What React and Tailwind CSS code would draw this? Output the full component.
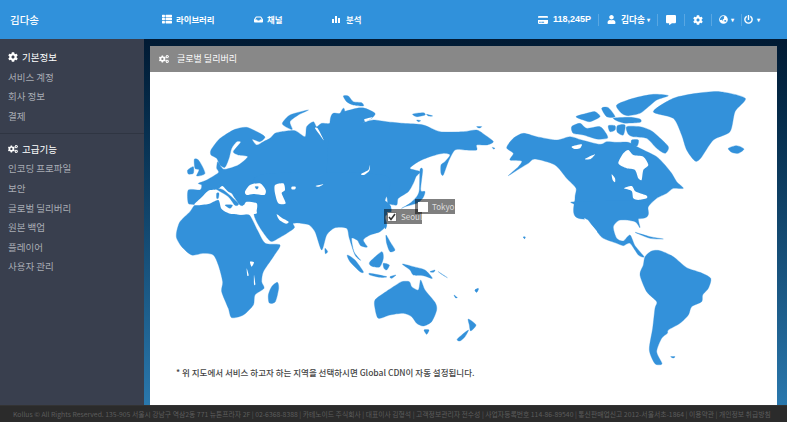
import React from "react";
import { FaThList, FaInbox, FaCreditCard, FaUser, FaCommentAlt, FaCog, FaCogs, FaGlobeAsia, FaPowerOff } from "react-icons/fa";

// Closed Catmull-Rom curve through the traced points, so coasts read as organic outlines.
const pts = (s) => {
  const p = s.trim().split(/\s+/).map((q) => q.split(",").map(Number));
  const n = p.length;
  let d = `M${p[0][0]},${p[0][1]}`;
  for (let i = 0; i < n; i++) {
    const a = p[(i - 1 + n) % n], b = p[i], c = p[(i + 1) % n], e = p[(i + 2) % n];
    const c1x = b[0] + (c[0] - a[0]) / 8, c1y = b[1] + (c[1] - a[1]) / 8;
    const c2x = c[0] - (e[0] - b[0]) / 8, c2y = c[1] - (e[1] - b[1]) / 8;
    d += `C${c1x.toFixed(1)},${c1y.toFixed(1)} ${c2x.toFixed(1)},${c2y.toFixed(1)} ${c[0]},${c[1]}`;
  }
  return d + "Z";
};
const BLUE = "#3391da";

// Each group is traced at 3x from an origin on the page; pieces overlap to form the continents.
const map = [
  {
    x: 175, y: 90,
    land: [
      // Europe and western Russia
      "40,300 75,300 80,285 70,280 95,270 130,248 125,235 128,215 138,230 150,238 190,225 218,200 190,195 175,185 197,157 185,155 170,175 162,205 150,232 135,225 125,205 108,195 108,180 130,150 150,135 180,118 215,112 255,130 270,142 255,155 232,148 245,165 265,155 285,145 300,130 320,125 360,122 390,140 395,110 415,95 425,110 440,100 465,100 490,80 510,70 510,390 320,390 240,370 170,370 60,345 40,340",
      "58,208 72,212 90,250 65,258 72,240 60,235",
      "38,240 55,230 55,250 40,252",
      "322,100 345,75 400,60 370,75 345,95 352,118 335,112",
    ],
    holes: [
      "58,345 80,322 100,302 128,298 142,288 160,305 190,320 205,345 215,335 245,340 245,362 240,372 170,372 140,357 130,330 100,342",
      "210,305 225,285 255,280 272,300 268,315 235,312 215,315",
      "300,285 325,280 330,300 320,310 332,340 310,340 300,310",
      "350,290 362,290 360,298 350,298",
      "422,288 445,283 432,290",
      "420,115 428,115 446,150 438,140",
    ],
    top: [
      "125,298 145,300 190,340 180,346 160,320",
      "170,305 200,320 205,345 195,345 180,325",
      "150,345 172,345 165,355",
      "125,310 132,310 130,325 125,325",
      "240,290 250,290 246,298",
    ],
  },
  {
    x: 330, y: 90,
    land: [
      // Siberia and the far east
      "0,95 30,70 80,55 105,55 135,70 125,85 100,97 130,90 170,95 220,100 280,105 330,125 400,125 440,120 465,135 490,155 470,165 440,165 440,180 405,180 375,180 355,215 340,255 333,250 333,225 345,215 360,195 340,190 300,200 265,215 240,235 270,245 258,260 250,280 235,305 205,325 200,345 175,340 170,320 155,325 180,345 170,375 0,390",
      "270,240 278,240 272,300 285,305 278,325 260,340 225,350 215,355 240,340 260,320 268,300",
      "40,18 55,18 70,35 95,38 100,48 70,45 50,35",
      "248,72 280,68 285,75 260,80",
      "290,73 308,78 295,78",
      "260,90 272,92 265,95",
      "440,110 455,110 448,114",
      "487,172 495,175 490,177",
    ],
    holes: ["93,252 115,240 120,225 118,242 102,255", "103,88 128,82 108,95"],
    top: [],
  },
  {
    x: 150, y: 75,
    land: [
      // South Asia, Arabia
      "705,380 722,395 706,425 710,450 690,470 660,480 640,495 652,516 632,512 622,496 605,490 612,530 632,556 615,540 598,490 590,460 555,458 530,480 515,525 495,470 470,445 430,445 432,460 385,490 358,496 312,418 330,300 700,300",
      // Africa
      "80,470 90,440 120,410 135,390 165,385 200,392 215,400 245,412 270,420 298,420 322,465 346,505 390,510 370,545 340,590 335,620 342,640 315,660 310,690 280,720 245,728 235,700 215,650 218,620 205,570 190,540 160,535 125,540 95,515 80,490",
      "382,622 386,640 376,680 358,684 355,660 365,635",
      "592,540 615,555 640,590 630,590 600,560",
      "704,448 710,452 706,462",
      "525,520 533,530 526,536",
    ],
    holes: [
      "380,418 395,428 416,440 408,446 388,435",
      "300,560 312,562 305,575",
      "290,580 296,600 292,602",
      "312,600 316,628 312,628",
    ],
    top: [],
  },
  {
    x: 370, y: 215,
    land: [
      // Australia, Oceania
      "15,255 45,232 75,212 95,200 118,200 125,215 145,225 152,195 165,225 195,262 200,285 185,320 160,333 140,325 125,305 100,295 60,300 25,310 15,280",
      "162,345 177,345 170,358",
      "295,312 318,330 302,348 298,330",
      "262,372 295,345 285,365 270,378",
      "40,145 58,150 50,165 42,160",
      "97,147 130,155 165,165 187,190 160,182 130,180 120,165",
      "0,140 35,110 40,130 30,155 10,155 0,150",
      "48,60 60,80 75,105 60,110 50,85",
      "0,175 50,185 30,187 0,180",
      "60,185 78,180 65,190",
      "180,170 195,165 190,172",
      "205,170 232,188 215,178",
      "315,225 325,222 320,232",
      "252,240 262,248 256,248",
      "461,66 466,68 463,71",
    ],
    holes: [],
    top: [],
  },
  {
    x: 500, y: 85,
    land: [
      // Canada
      "20,188 40,160 70,145 110,155 170,165 210,155 245,165 300,178 320,170 350,172 385,172 420,190 470,215 495,240 515,265 530,290 550,310 520,310 500,325 470,340 445,365 430,400 235,400 225,340 228,310 200,280 165,240 105,222 85,235 60,250 25,272 55,245 65,228 30,225 40,205",
      "215,125 240,115 260,130 300,125 318,145 322,160 290,162 250,150 220,145",
      "380,125 420,125 450,135 470,150 505,185 495,205 470,190 440,160 400,155 385,148",
      "395,165 415,165 412,182 395,180",
      "350,60 400,40 460,28 505,32 470,45 440,70 420,85 385,92 365,85",
      "340,100 390,97 420,102 420,112 370,114",
      "228,95 260,85 285,80 300,95 270,110 250,105",
      "305,70 325,68 345,95 320,95",
      "325,122 345,122 345,135 330,140",
      "352,122 375,120 370,150 352,142",
    ],
    holes: [
      "355,235 370,205 385,195 400,210 430,215 445,240 430,255 425,285 415,280 405,255 380,250",
      "372,310 395,303 405,318 420,325 440,332 440,340 415,345 400,340 395,318",
      "215,185 245,178 240,190 225,192",
      "255,222 285,208 272,222",
      "335,268 345,280 345,292 338,285",
    ],
    top: [],
  },
  {
    x: 460, y: 75,
    land: [
      // USA, Central America
      "345,380 560,380 535,425 540,458 525,440 480,435 460,455 470,490 490,498 510,480 525,512 552,545 535,540 510,505 490,512 470,505 430,490 415,475 380,430 345,390",
      // Greenland
      "580,110 640,70 710,55 780,50 856,70 825,110 810,170 760,195 722,250 705,258 680,225 665,180 640,130",
      "805,220 830,212 852,222 835,235 815,232",
      // South America
      "540,600 550,570 555,545 575,528 600,527 640,545 680,578 720,592 752,610 745,640 728,660 725,680 695,695 685,720 660,745 625,765 622,775 605,790 590,830 606,866 585,866 568,825 578,760 585,700 590,680 560,650",
      // Caribbean and specks
      "525,472 570,485 610,492 570,490",
      "632,845 645,845 640,849",
      "45,645 55,640 50,652",
      "190,486 196,486 193,490",
    ],
    holes: ["375,430 410,468 405,470 378,440"],
    top: [],
  },
];

function Check({ on }) {
  return (
    <span className="w-[10px] h-[10px] bg-white flex items-center justify-center">
      {on && (
        <svg viewBox="0 0 10 10" className="w-[10px] h-[10px]">
          <rect x="0.5" y="0.5" width="9" height="9" fill="none" stroke="#777" />
          <path d="M2 5l2 2.5L8 2" fill="none" stroke="#333" strokeWidth="1.6" />
        </svg>
      )}
    </span>
  );
}

function Pin({ label, on, className }) {
  return (
    <div className={"absolute h-[15px] flex items-center gap-[4px] pl-[3px] bg-black/50 text-[#ddd] text-[8px] " + className}>
      <Check on={on} />
      <span>{label}</span>
    </div>
  );
}

const Sep = () => <span className="w-px h-[12px] bg-white/20" />;

function Bars() {
  return (
    <svg viewBox="0 0 8 8" className="w-[8px] h-[8px]" fill="currentColor">
      <rect x="0" y="4" width="2" height="4" />
      <rect x="3" y="1" width="2" height="7" />
      <rect x="6" y="3" width="2" height="5" />
    </svg>
  );
}

function Section({ icon, title, items }) {
  return (
    <div>
      <div className="h-[20px] flex items-center gap-[4px] pl-[8px] text-white text-[9.5px]">
        {icon}
        <span>{title}</span>
      </div>
      {items.map((t) => (
        <div key={t} className="h-[19.6px] flex items-center pl-[8px] text-[#a9adb5] text-[9.5px]">{t}</div>
      ))}
    </div>
  );
}

function WorldMap() {
  const draw = (list, fill, key) =>
    list.map((p, i) => <path key={key + i} d={pts(p)} fill={fill} stroke={fill === BLUE ? BLUE : "none"} strokeWidth="1" strokeLinejoin="round" />);
  return (
    <svg viewBox="150 72 627 294" className="block w-[627px] h-[294px]">
      {map.map((g) => (
        <g key={g.x + "-" + g.y} transform={`translate(${g.x} ${g.y}) scale(0.33333)`}>
          {draw(g.land, BLUE, "l")}
        </g>
      ))}
      {map.map((g) => (
        <g key={g.x + "_" + g.y} transform={`translate(${g.x} ${g.y}) scale(0.33333)`}>
          {draw(g.holes, "#ffffff", "h")}
          {draw(g.top, BLUE, "t")}
        </g>
      ))}
    </svg>
  );
}

export default function App() {
  return (
    <div className="w-[787px] h-[422px] overflow-hidden flex flex-col bg-[#2b2b2b]" style={{ fontFamily: '"Noto Sans CJK KR", "Noto Sans", sans-serif' }}>
      <header className="h-[39px] shrink-0 bg-[#3091db] text-white flex items-center">
        <div className="w-[162px] pl-[10px] text-[10.5px] font-medium">김다송</div>
        <nav className="flex items-center text-[8.4px] font-bold">
          <div className="w-[92px] flex items-center gap-[4px]"><FaThList className="w-[10px] h-[10px]" />라이브러리</div>
          <div className="w-[78px] flex items-center gap-[4px]"><FaInbox className="w-[9px] h-[9px]" />채널</div>
          <div className="flex items-center gap-[6px]"><Bars />분석</div>
        </nav>
        <div className="ml-auto pr-[27px] flex items-center gap-[7px] text-[9px] font-semibold">
          <FaCreditCard className="w-[10px] h-[10px] -mr-[2px]" />
          <span className="w-[38px] text-[9px] font-bold whitespace-nowrap" style={{ fontFamily: '"Liberation Sans", sans-serif' }}>118,245P</span>
          <Sep />
          <FaUser className="w-[9px] h-[9px] ml-[1px]" />
          <span className="text-[8.7px] -ml-[2px]">김다송</span>
          <span className="text-[6px] -ml-[5px]">▾</span>
          <Sep />
          <FaCommentAlt className="w-[10px] h-[10px] mx-[1px]" />
          <Sep />
          <FaCog className="w-[10px] h-[10px] mx-[1px]" />
          <Sep />
          <FaGlobeAsia className="w-[9px] h-[9px]" />
          <span className="text-[6px] -ml-[4px]">▾</span>
          <Sep />
          <FaPowerOff className="w-[9px] h-[9px] -ml-[5px]" />
          <span className="text-[6px] -ml-[3px]">▾</span>
        </div>
      </header>

      <div className="h-[366px] flex">
        <aside className="w-[144px] shrink-0 bg-[#393f4e] pt-[8px]">
          <Section icon={<FaCog className="w-[10px] h-[10px]" />} title="기본정보" items={["서비스 계정", "회사 정보", "결제"]} />
          <div className="h-px bg-[#2f3542] mt-[7px] mb-[5px]" />
          <Section icon={<FaCogs className="w-[10px] h-[10px]" />} title="고급기능" items={["인코딩 프로파일", "보안", "글로벌 딜리버리", "원본 백업", "플레이어", "사용자 관리"]} />
        </aside>

        <main className="flex-1 bg-gradient-to-b from-[#011a33] to-[#2a78ad] pt-[7px] pl-[6px] pr-[10px] flex">
          <section className="w-[627px] flex flex-col bg-white">
            <div className="h-[26px] shrink-0 bg-[#888888] text-white flex items-center gap-[8px] pl-[9px] text-[9px]">
              <FaCogs className="w-[10px] h-[10px]" />
              <span>글로벌 딜리버리</span>
            </div>
            <div className="relative">
              <WorldMap />
              <Pin label="Seoul" on className="left-[234px] top-[137px] w-[38px]" />
              <Pin label="Tokyo" className="left-[265px] top-[127px] w-[40px]" />
            </div>
            <p className="pl-[26px] text-[8.5px] leading-[12px] font-medium text-[#444] whitespace-nowrap">
              * 위 지도에서 서비스 하고자 하는 지역을 선택하시면 Global CDN이 자동 설정됩니다.
            </p>
          </section>
        </main>
      </div>

      <footer className="h-[17px] shrink-0 bg-[#2b2b2b] text-[#5d5d5d] text-[6.83px] flex items-center pl-[13px] whitespace-nowrap overflow-hidden border-t border-[#333]">
        Kollus © All Rights Reserved. 135-905 서울시 강남구 역삼2동 771 뉴톤프라자 2F | 02-6368-8388 | 카테노이드 주식회사 | 대표이사 김형석 | 고객정보관리자 전수성 | 사업자등록번호 114-86-89540 | 통신판매업신고 2012-서울서초-1864 | 이용약관 | 개인정보 취급방침
      </footer>
    </div>
  );
}
